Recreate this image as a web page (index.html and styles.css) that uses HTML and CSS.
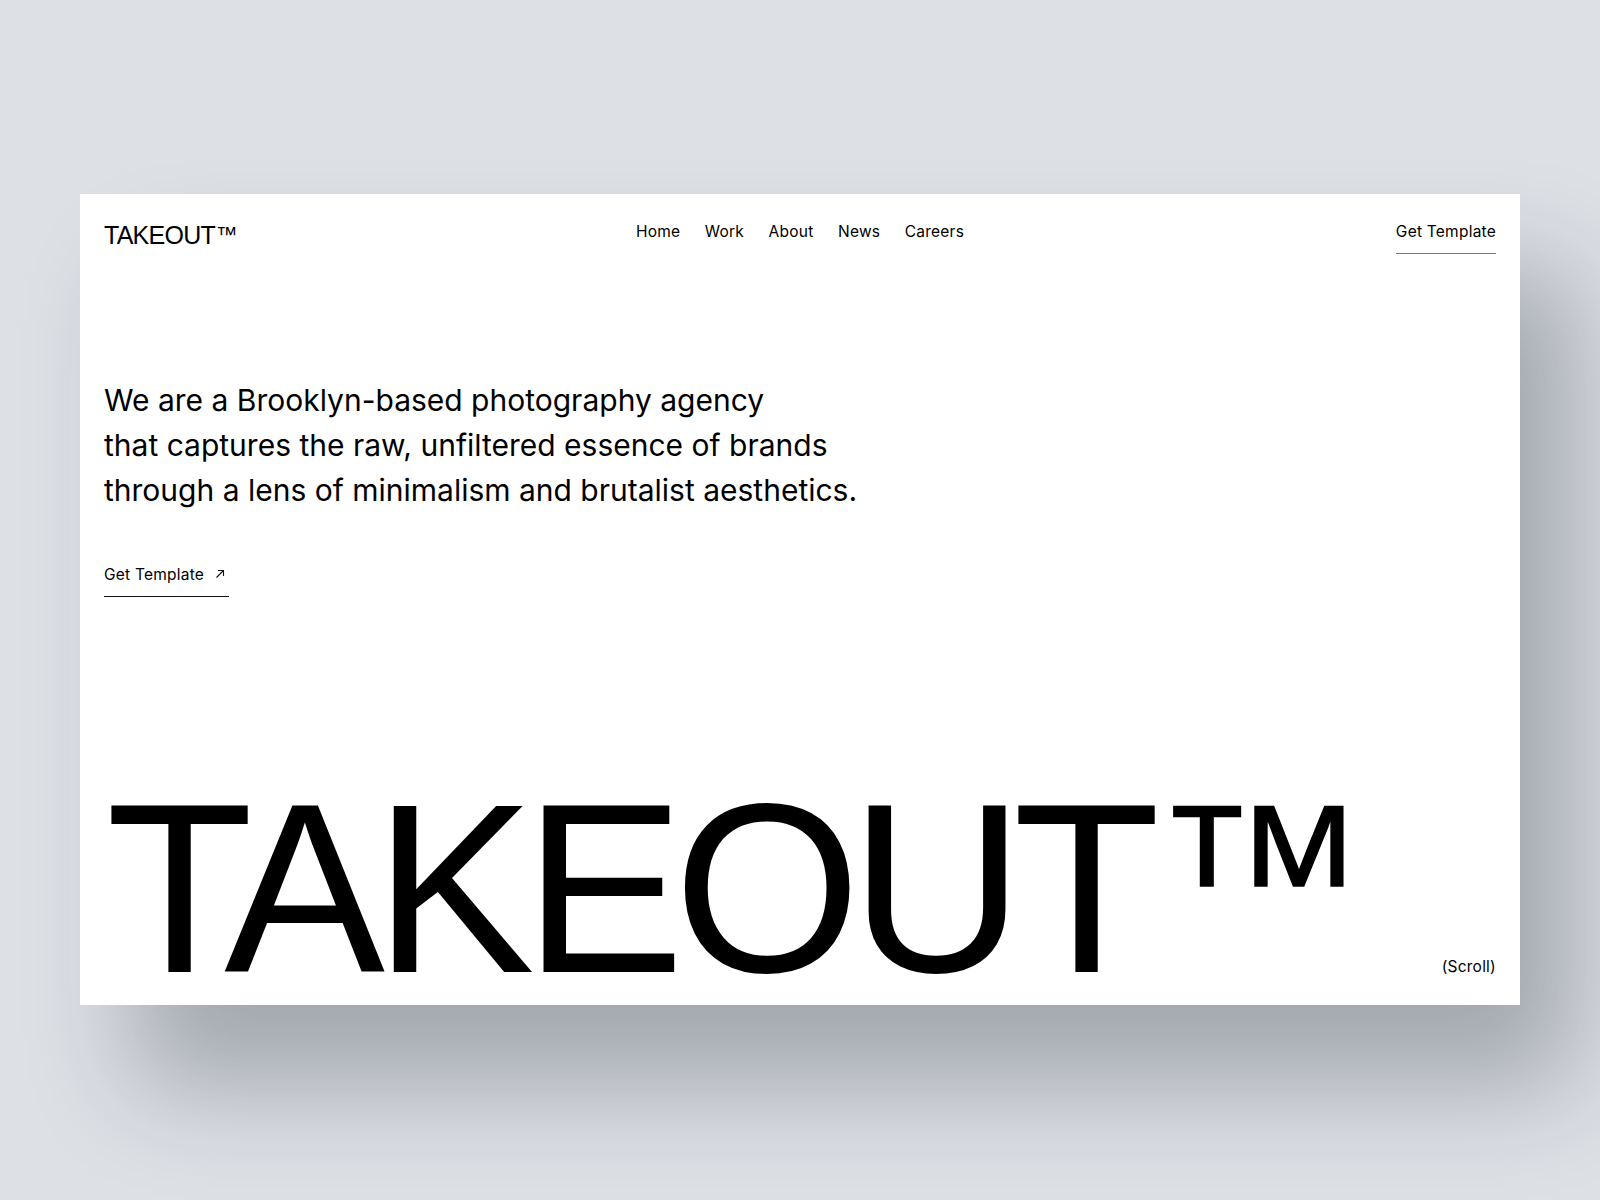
FILE: index.html
```html
<!DOCTYPE html>
<html lang="en">
<head>
<meta charset="utf-8">
<title>TAKEOUT™</title>
<link rel="stylesheet" href="styles.css">
</head>
<body>
<main class="stage">
  <section class="card">
    <header class="header">
      <div class="logo">TAKEOUT<span class="logo-tm">™</span></div>
      <nav class="nav">
        <a href="#">Home</a>
        <a href="#">Work</a>
        <a href="#">About</a>
        <a href="#">News</a>
        <a href="#">Careers</a>
      </nav>
      <a class="cta-top" href="#">Get Template</a>
    </header>
    <div class="hero">
      <p class="intro">We are a Brooklyn-based photography agency<br>that captures the raw, unfiltered essence of brands<br>through a lens of minimalism and brutalist aesthetics.</p>
      <a class="cta" href="#">Get Template
        <svg class="arrow" viewBox="0 0 10 10" width="10" height="10" aria-hidden="true"><path d="M1.5 8.5 L8.5 1.5 M3 1.5 H8.5 V7" fill="none" stroke="#111" stroke-width="1.1"/></svg>
      </a>
    </div>
    <div class="bottom">
      <div class="wordmark">TAKEOUT<span class="tm">™</span></div>
      <div class="scroll">(Scroll)</div>
    </div>
  </section>
</main>
</body>
</html>
```

FILE: styles.css
```css
* { box-sizing: border-box; }
html, body { margin: 0; padding: 0; }
body {
  background: #dde0e5;
  font-family: Inter, "Noto Sans", "Liberation Sans", sans-serif;
  color: #000;
  width: 1600px;
  height: 1200px;
  overflow: hidden;
}
a { color: inherit; text-decoration: none; }
.stage {
  padding: 194px 80px 0 80px;
}
.card {
  width: 1440px;
  height: 811px;
  background: #fff;
  box-shadow: 55px 80px 100px rgba(30, 35, 45, 0.30);
  padding: 0 24px;
  display: flex;
  flex-direction: column;
}
.header {
  display: grid;
  grid-template-columns: 1fr auto 1fr;
  align-items: start;
  padding-top: 26px;
}
.logo {
  font-family: "Liberation Sans", Arial, sans-serif;
  font-size: 25px;
  line-height: 28px;
  letter-spacing: -0.03em;
  margin-top: 1px;
}
.logo-tm {
  font-size: 0.86em;
  line-height: 0;
  vertical-align: 2px;
  margin-left: 1px;
}
.nav {
  display: flex;
  gap: 24.5px;
  font-size: 15.5px;
  line-height: 20px;
  letter-spacing: 0.015em;
  padding-top: 2px;
}
.cta-top {
  justify-self: end;
  font-size: 15.5px;
  line-height: 20px;
  letter-spacing: 0.015em;
  padding-top: 2px;
  padding-bottom: 11px;
  border-bottom: 1.5px solid #7a7a7a;
}
.hero {
  margin-top: 124px;
}
.intro {
  margin: 0;
  font-size: 30px;
  line-height: 45px;
  letter-spacing: 0;
  font-weight: 400;
}
.cta {
  display: inline-flex;
  align-items: center;
  gap: 11px;
  margin-top: 52px;
  font-size: 15.5px;
  line-height: 20px;
  letter-spacing: 0.015em;
  padding-right: 4px;
  padding-bottom: 11px;
  border-bottom: 1.5px solid #111;
}
.arrow { margin-top: -2px; }
.bottom {
  margin-top: auto;
  display: flex;
  justify-content: space-between;
  align-items: flex-end;
  padding-bottom: 28px;
}
.wordmark {
  font-family: "Liberation Sans", Arial, sans-serif;
  font-size: 241px;
  line-height: 170px;
  height: 170px;
  letter-spacing: -11px;
  margin-left: 2px;
  margin-bottom: 3px;
  white-space: nowrap;
}
.tm {
  font-size: 0.89em;
  line-height: 0;
  vertical-align: 19px;
  letter-spacing: -8px;
  margin-left: 4px;
}
.scroll {
  font-size: 15.5px;
  line-height: 20px;
  letter-spacing: 0.015em;
}
```
